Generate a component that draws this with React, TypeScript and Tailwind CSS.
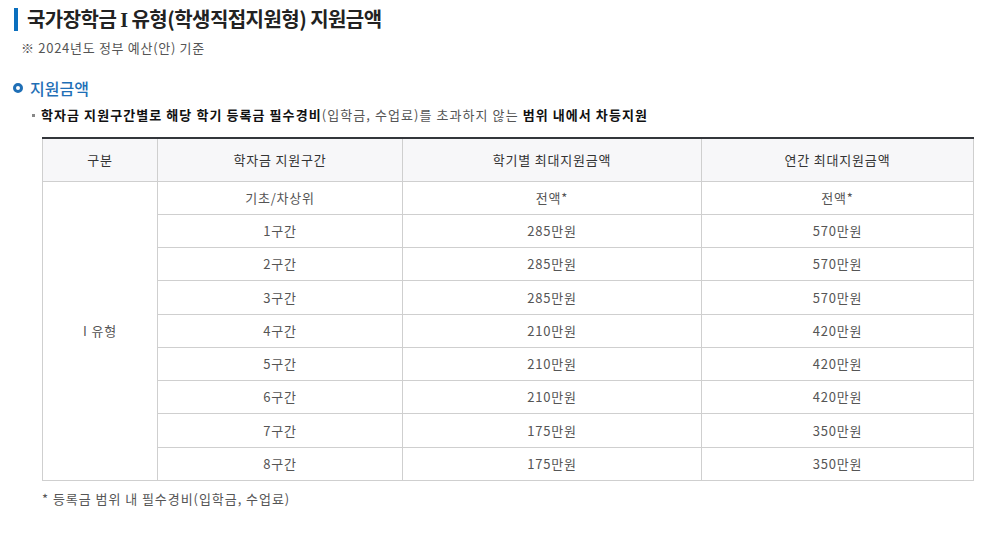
const rows = [
  { range: '기초/차상위', sem: '전액*', year: '전액*' },
  { range: '1구간', sem: '285만원', year: '570만원' },
  { range: '2구간', sem: '285만원', year: '570만원' },
  { range: '3구간', sem: '285만원', year: '570만원' },
  { range: '4구간', sem: '210만원', year: '420만원' },
  { range: '5구간', sem: '210만원', year: '420만원' },
  { range: '6구간', sem: '210만원', year: '420만원' },
  { range: '7구간', sem: '175만원', year: '350만원' },
  { range: '8구간', sem: '175만원', year: '350만원' },
];

export default function App() {
  return (
    <div
      className="w-[1006px] h-[536px] bg-white text-[#333]"
      style={{ fontFamily: '"Noto Sans CJK KR", "Noto Sans", sans-serif' }}
    >
      {/* Title */}
      <div className="flex items-center h-[36px] pt-[2px] pl-[14px]">
        <span className="w-[4px] h-[23px] bg-[#0b6fbe] mr-[9px]" />
        <h1 className="text-[20px] font-bold text-[#222] leading-none tracking-[-0.55px]">
          국가장학금 <span className="font-['Liberation_Serif',serif]">I</span> 유형(학생직접지원형) 지원금액
        </h1>
      </div>
      <p className="h-[24px] pl-[21px] text-[13px] leading-[24px] text-[#555] tracking-[0.7px]">
        ※ 2024년도 정부 예산(안) 기준
      </p>

      {/* Section heading */}
      <div className="flex items-center gap-[7px] mt-[17px] pl-[13px] h-[22px]">
        <span className="w-[10px] h-[10px] rounded-full border-[3px] border-[#1f6fb6]" />
        <h2 className="text-[16px] text-[#1f6fb6] leading-none font-medium">지원금액</h2>
      </div>

      <div className="flex items-center mt-[5px] pl-[32px] h-[22px] text-[13px] tracking-[1.07px]">
        <span className="w-[3px] h-[3px] bg-[#888] mr-[6px]" />
        <p className="text-[#333]">
          <b className="font-bold text-[#111]">학자금 지원구간별로 해당 학기 등록금 필수경비</b>
          <span className="text-[#555]">(입학금, 수업료)를 초과하지 않는 </span>
          <b className="font-bold text-[#111]">범위 내에서 차등지원</b>
        </p>
      </div>

      {/* Table */}
      <div className="mt-[11px] ml-[42px] w-[932px]">
        <table className="w-full border-collapse border-t-[2px] border-t-[#33363b] text-[13px] text-center tracking-[0.8px]">
          <thead>
            <tr className="bg-[#f7f7f9] h-[43px] text-[#333]">
              <th className="w-[115px] font-normal border border-[#cfcfcf] border-t-0">구분</th>
              <th className="w-[245px] font-normal border border-[#cfcfcf] border-t-0">학자금 지원구간</th>
              <th className="w-[299px] font-normal border border-[#cfcfcf] border-t-0">학기별 최대지원금액</th>
              <th className="font-normal border border-[#cfcfcf] border-t-0">연간 최대지원금액</th>
            </tr>
          </thead>
          <tbody className="text-[#555]">
            {rows.map((r, i) => (
              <tr key={i} className="h-[33.25px]">
                {i === 0 && (
                  <td rowSpan={rows.length} className="border border-[#cfcfcf]">
                    I 유형
                  </td>
                )}
                <td className="border border-[#cfcfcf]">{r.range}</td>
                <td className="border border-[#cfcfcf]">{r.sem}</td>
                <td className="border border-[#cfcfcf]">{r.year}</td>
              </tr>
            ))}
          </tbody>
        </table>
      </div>

      <p className="mt-[8px] pl-[42px] text-[13px] text-[#555] tracking-[0.95px]">* 등록금 범위 내 필수경비(입학금, 수업료)</p>
    </div>
  );
}
